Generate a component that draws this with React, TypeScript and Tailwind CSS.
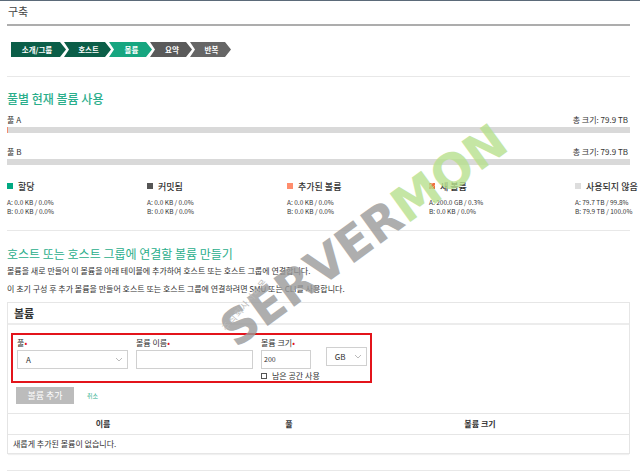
import React from "react";

const STEPS = [
  { label: "소개/그룹", w: "w-[55px]", bg: "bg-[#0b5e48]", first: true },
  { label: "호스트", w: "w-[47px]", bg: "bg-[#0b5e48]" },
  { label: "볼륨", w: "w-[43px]", bg: "bg-[#17a680]" },
  { label: "요약", w: "w-[42px]", bg: "bg-[#5a5a5a]" },
  { label: "반복", w: "w-[41px]", bg: "bg-[#666666]" },
];

const LEGEND = [
  { label: "할당", sq: "bg-[#01a982]", a: "A: 0.0 KB / 0.0%", b: "B: 0.0 KB / 0.0%" },
  { label: "커밋됨", sq: "bg-[#555555]", a: "A: 0.0 KB / 0.0%", b: "B: 0.0 KB / 0.0%" },
  { label: "추가된 볼륨", sq: "bg-[#ff8d6d]", a: "A: 0.0 KB / 0.0%", b: "B: 0.0 KB / 0.0%" },
  { label: "새 볼륨", sq: "bg-[repeating-linear-gradient(135deg,#f07040_0px,#f07040_2px,#f9a07a_2px,#f9a07a_3px)]", a: "A: 200.0 GB / 0.3%", b: "B: 0.0 KB / 0.0%" },
  { label: "사용되지 않음", sq: "bg-[#dddddd]", a: "A: 79.7 TB / 99.8%", b: "B: 79.9 TB / 100.0%" },
];

function PoolBar({ name, sliver }: { name: string; sliver?: boolean }) {
  return (
    <div>
      <div className="flex justify-between items-end h-[8px] text-[8px] leading-none">
        <span>{name}</span>
        <span className="pr-[2px]">총 크기: 79.9 TB</span>
      </div>
      <div className="mt-[3px] h-[6px] bg-[#d9d9d9] flex">
        {sliver && <div className="w-[1px] bg-[#f58b6b]" />}
      </div>
    </div>
  );
}

function Chevron() {
  return (
    <svg width="8" height="5" viewBox="0 0 8 5" className="text-[#bbb]">
      <path d="M1 1 L4 4 L7 1" fill="none" stroke="currentColor" strokeWidth="1" />
    </svg>
  );
}

export default function App() {
  return (
    <div className="relative w-[640px] h-[475px] overflow-hidden bg-white border-t border-[#5b6a79] text-[#333] font-['Noto_Sans_CJK_KR','Noto_Sans',sans-serif]">
      <div className="pl-[7px] pr-[10px]">
        {/* title */}
        <div className="h-[23px] pt-[3px] pl-[1px] text-[11px] leading-[14px] text-[#444]">구축</div>
        <div className="h-[2px] bg-[#adadad]" />

        {/* wizard steps */}
        <div className="mt-[16px] ml-[4px] flex h-[15px]">
          {STEPS.map((s, i) => (
            <div
              key={s.label}
              className={`${s.w} ${s.bg} ${i > 0 ? "-ml-[2px]" : ""} ${
                s.first
                  ? "[clip-path:polygon(0_0,calc(100%-6px)_0,100%_50%,calc(100%-6px)_100%,0_100%)]"
                  : "[clip-path:polygon(0_0,calc(100%-6px)_0,100%_50%,calc(100%-6px)_100%,0_100%,5px_50%)]"
              } flex items-center justify-center text-white text-[7.5px] leading-none font-bold ${s.first ? "pr-[3px]" : "pl-[2px]"}`}
            >
              {s.label}
            </div>
          ))}
        </div>

        <div className="mt-[19px] h-px bg-[#e8e8e8]" />

        {/* pool usage */}
        <div className="mt-[15px] text-[12px] leading-[14px] font-medium text-[#2aae8b]">풀별 현재 볼륨 사용</div>
        <div className="mt-[10px]">
          <PoolBar name="풀 A" sliver />
        </div>
        <div className="mt-[15px]">
          <PoolBar name="풀 B" />
        </div>

        {/* legend */}
        <div className="mt-[17px] -mr-[10px] grid grid-cols-[140px_140px_142px_146px_1fr] whitespace-nowrap">
          {LEGEND.map((l) => (
            <div key={l.label}>
              <div className="flex items-center gap-[5px] h-[8px]">
                <div className={`w-[6px] h-[6px] ${l.sq}`} />
                <span className="text-[9px] leading-none font-medium text-[#333]">{l.label}</span>
              </div>
              <div className="mt-[8px] text-[6.5px] leading-[9px] text-[#333]">{l.a}</div>
              <div className="text-[6.5px] leading-[9px] text-[#333]">{l.b}</div>
            </div>
          ))}
        </div>

        <div className="mt-[14px] h-px bg-[#e8e8e8]" />

        {/* create volumes */}
        <div className="mt-[16px] text-[12px] leading-[14px] text-[#2aae8b]">호스트 또는 호스트 그룹에 연결할 볼륨 만들기</div>
        <p className="mt-[5px] text-[8px] leading-[10px]">볼륨을 새로 만들어 이 볼륨을 아래 테이블에 추가하여 호스트 또는 호스트 그룹에 연결합니다.</p>
        <p className="mt-[8px] text-[8px] leading-[10px]">이 초기 구성 후 추가 볼륨을 만들어 호스트 또는 호스트 그룹에 연결하려면 SMU 또는 CLI를 사용합니다.</p>

        {/* volumes box */}
        <div className="mt-[8px] border border-[#e6e6e6] border-b-0">
          <div className="h-[22px] pl-[6px] flex items-center text-[11px] font-bold text-[#333] border-b-2 border-[#ececec]">볼륨</div>

          <div className="mt-[8px] ml-[3px] w-[361px] h-[50px] border-2 border-[#e3141b] pl-[4px] pt-[3px] flex gap-[8px]">
            <div>
              <div className="text-[8px] leading-[10px] h-[12px]">
                풀<span className="text-[#e3141b]">•</span>
              </div>
              <div className="w-[111px] h-[19px] border border-[#d0d0d0] flex items-center justify-between pl-[8px] pr-[4px] text-[8px]">
                <span>A</span>
                <Chevron />
              </div>
            </div>
            <div>
              <div className="text-[8px] leading-[10px] h-[12px]">
                볼륨 이름<span className="text-[#e3141b]">•</span>
              </div>
              <div className="w-[117px] h-[19px] border border-[#d0d0d0]" />
            </div>
            <div>
              <div className="text-[8px] leading-[10px] h-[12px]">
                볼륨 크기<span className="text-[#e3141b]">•</span>
              </div>
              <div className="w-[50px] h-[19px] border border-[#d0d0d0] flex items-center pl-[2px] text-[7px]">200</div>
              <div className="mt-[3px] flex items-center gap-[5px] text-[8px] leading-none">
                <div className="w-[6px] h-[6px] border border-[#555]" />
                <span>남은 공간 사용</span>
              </div>
            </div>
            <div className="pt-[9px] -ml-[2px]">
              <div className="w-[41px] h-[19px] border border-[#d0d0d0] flex items-center justify-between pl-[8px] pr-[4px] text-[8px]">
                <span>GB</span>
                <Chevron />
              </div>
            </div>
          </div>

          <div className="mt-[4px] ml-[8px] flex items-center gap-[13px]">
            <div className="w-[58px] h-[17px] bg-[#bcbcbc] text-white text-[9px] flex items-center justify-center">볼륨 추가</div>
            <span className="text-[6px] text-[#2aae8b]">취소</span>
          </div>

          {/* table */}
          <div className="mt-[9px] border-y border-[#e6e6e6] shadow-[0_1px_1px_rgba(0,0,0,0.06)]">
            <div className="grid grid-cols-[190px_182px_200px_1fr] h-[21px] items-center text-[8px] font-bold border-b border-[#e6e6e6]">
              <div className="text-center">이름</div>
              <div className="text-center">풀</div>
              <div className="text-center">볼륨 크기</div>
              <div />
            </div>
            <div className="h-[18px] flex items-center pl-[5px] text-[8px]">새롭게 추가된 볼륨이 없습니다.</div>
          </div>
        </div>

        <div className="mt-[16px] h-px bg-[#e8e8e8]" />
      </div>

      {/* watermark overlay */}
      <div className="pointer-events-none absolute left-[226px] top-[310px] origin-left -rotate-[36deg] flex items-baseline font-['DejaVu_Sans',sans-serif] font-black text-[48px] leading-none opacity-80">
        <span className="text-[#9a9a9a]">SERVER</span>
        <span className="text-[#b7e08e]">MON</span>
      </div>
      <div className="pointer-events-none absolute left-[224px] top-[322px] origin-left -rotate-[50deg] text-[9px] text-[#bbb] tracking-[1px]">주식회사서버몬</div>
    </div>
  );
}
